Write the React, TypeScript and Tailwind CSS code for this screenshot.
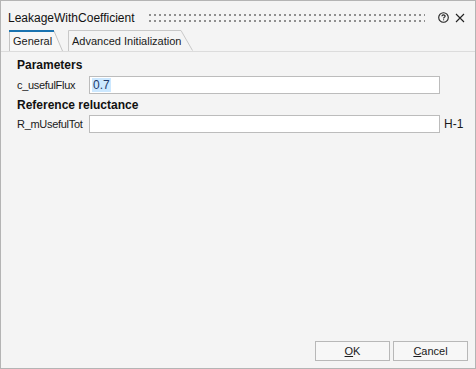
import React from "react";

function Grip() {
  return (
    <svg className="block h-[11px] w-full">
      <defs>
        <pattern id="dots" x="0" y="2" width="5" height="6" patternUnits="userSpaceOnUse">
          <rect x="0" y="0" width="2" height="2" fill="#8f8f8f" />
        </pattern>
      </defs>
      <rect x="0" y="2" width="100%" height="8" fill="url(#dots)" />
    </svg>
  );
}

function Tab({ label, active, width }: { label: string; active?: boolean; width: number }) {
  const w = width;
  const h = 21;
  return (
    <div className="relative flex h-[21px] items-center pl-[4px] pt-[2px] text-[11px] text-[#1a1a1a]" style={{ width: w }}>
      <svg className="absolute left-0 top-0" width={w} height={h}>
        {active ? (
          <>
            <path d={`M0.5 ${h} L0.5 1 L${w - 9} 1 L${w - 0.5} ${h}`} fill="#f7f7f7" stroke="#c4c4c4" strokeWidth="1" />
            <rect x="0" y="0" width={w - 9} height="2" fill="#1a73b0" />
          </>
        ) : (
          <path d={`M0.5 ${h} L0.5 0.5 L${w - 12} 0.5 L${w - 0.5} ${h - 0.5}`} fill="#f4f4f4" stroke="#c8c8c8" strokeWidth="1" />
        )}
      </svg>
      <span className="relative">{label}</span>
    </div>
  );
}

export default function App() {
  return (
    <div className="flex h-[369px] w-[476px] flex-col border border-[#b4b4b4] bg-[#f4f4f4] font-['Liberation_Sans',Arial,sans-serif] text-[#1a1a1a]">
      {/* title bar */}
      <div className="flex h-[30px] items-center pl-[7px] pr-[10px] pt-[3px]">
        <span className="shrink-0 text-[12px] text-[#111]">LeakageWithCoefficient</span>
        <div className="ml-[14px] mr-[13px] min-w-0 flex-1">
          <Grip />
        </div>
        <svg width="11" height="11" viewBox="0 0 11 11" className="mr-[6px] shrink-0">
          <circle cx="5.5" cy="5.5" r="4.8" fill="none" stroke="#222" strokeWidth="1.1" />
          <path d="M3.9 4.3 C3.9 3.3 4.6 2.9 5.5 2.9 C6.4 2.9 7.1 3.4 7.1 4.2 C7.1 5.1 5.6 5.2 5.6 6.4" fill="none" stroke="#222" strokeWidth="1.1" />
          <rect x="5.1" y="7.3" width="1" height="1" fill="#222" />
        </svg>
        <svg width="10" height="10" viewBox="0 0 10 10" className="shrink-0">
          <path d="M1 1 L9 9 M9 1 L1 9" stroke="#222" strokeWidth="1.1" />
        </svg>
      </div>

      {/* tab strip */}
      <div className="flex h-[21px] items-end gap-[5px] border-b border-[#dcdcdc] pl-[8px]">
        <Tab label="General" active width={54} />
        <Tab label="Advanced Initialization" width={125} />
      </div>

      {/* content */}
      <div className="flex flex-col pl-[16px] pt-[3px] text-[11px]">
        <div className="flex h-[20px] items-center font-bold text-[12px] text-[#111]">Parameters</div>
        <div className="flex h-[20px] items-center">
          <span className="w-[72px] tracking-[-0.3px]">c_usefulFlux</span>
          <div className="flex h-[18px] w-[351px] items-center border border-[#bcbcbc] bg-white pl-[2px]">
            <span className="bg-[#cce8ff] px-[1px] text-[12px] leading-[14px] text-[#1f3a6a]">0.7</span>
          </div>
        </div>
        <div className="flex h-[19px] items-center font-bold text-[12px] text-[#111]">Reference reluctance</div>
        <div className="flex h-[20px] items-center">
          <span className="w-[72px] tracking-[-0.3px]">R_mUsefulTot</span>
          <div className="h-[18px] w-[351px] border border-[#bcbcbc] bg-white" />
          <span className="ml-[4px] text-[12px]">H-1</span>
        </div>
      </div>

      <div className="flex-1" />

      {/* buttons */}
      <div className="flex justify-end gap-[3px] pb-[7px] pr-[7px]">
        <button className="flex h-[20px] w-[75px] items-center justify-center border border-[#b8b8b8] bg-[#f7f7f7] text-[11px] text-[#1a1a1a]">
          <span>
            <span className="underline">O</span>K
          </span>
        </button>
        <button className="flex h-[20px] w-[75px] items-center justify-center border border-[#b8b8b8] bg-[#f7f7f7] text-[11px] text-[#1a1a1a]">
          <span>
            <span className="underline">C</span>ancel
          </span>
        </button>
      </div>
    </div>
  );
}
